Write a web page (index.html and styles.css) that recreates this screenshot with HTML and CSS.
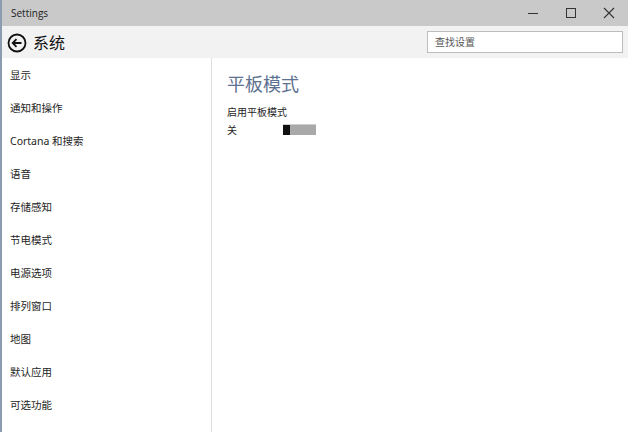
FILE: index.html
```html
<!DOCTYPE html>
<html lang="zh-CN">
<head>
    <meta charset="UTF-8">
    <title>Settings</title>
    <link rel="stylesheet" href="styles.css">
</head>
<body>
    <div class="window">
        <!-- Title bar -->
        <div class="titlebar">
            <span class="titlebar__text">Settings</span>
            <div class="controls">
                <span class="control">
                    <svg width="12" height="12" viewBox="0 0 12 12"><line x1="1" y1="6.5" x2="11" y2="6.5" stroke="#333" stroke-width="1"/></svg>
                </span>
                <span class="control">
                    <svg width="12" height="12" viewBox="0 0 12 12"><rect x="1.5" y="1.5" width="9" height="9" fill="none" stroke="#333" stroke-width="1"/></svg>
                </span>
                <span class="control">
                    <svg width="12" height="12" viewBox="0 0 12 12"><path d="M1 1 L11 11 M11 1 L1 11" stroke="#333" stroke-width="1.1"/></svg>
                </span>
            </div>
        </div>

        <!-- Header -->
        <div class="header">
            <svg class="back" width="20" height="20" viewBox="0 0 20 20">
                <circle cx="10" cy="10" r="8.5" fill="none" stroke="#111" stroke-width="1.8"/>
                <path d="M14.5 10 H6 M9.5 6.2 L5.7 10 L9.5 13.8" fill="none" stroke="#111" stroke-width="1.8"/>
            </svg>
            <span class="header__title">系统</span>
            <div class="search">查找设置</div>
        </div>

        <div class="main">
            <!-- Sidebar -->
            <ul class="nav">
                <li>显示</li>
                <li>通知和操作</li>
                <li>Cortana 和搜索</li>
                <li>语音</li>
                <li>存储感知</li>
                <li>节电模式</li>
                <li>电源选项</li>
                <li>排列窗口</li>
                <li>地图</li>
                <li>默认应用</li>
                <li>可选功能</li>
            </ul>

            <!-- Content -->
            <div class="content">
                <h2 class="content__title">平板模式</h2>
                <p class="setting__label">启用平板模式</p>
                <div class="setting__row">
                    <span class="setting__state">关</span>
                    <span class="toggle"><span class="toggle__thumb"></span></span>
                </div>
            </div>
        </div>
    </div>
</body>
</html>
```

FILE: styles.css
```css
/* Global Styles */
* {
    margin: 0;
    padding: 0;
    box-sizing: border-box;
}
body {
    width: 628px;
    height: 432px;
    overflow: hidden;
    font-family: "Liberation Sans", "Noto Sans CJK SC", sans-serif;
    color: #1e1e1e;
    background: #fff;
}
.window {
    height: 432px;
    display: flex;
    flex-direction: column;
    border-left: 2px solid #8c9bb0;
}
/* Title bar */
.titlebar {
    height: 26px;
    background: #c9c9c9;
    display: flex;
    align-items: center;
    padding-left: 9px;
}
.titlebar__text {
    font-family: "Open Sans", "Noto Sans CJK SC", sans-serif;
    font-size: 10px;
    color: #222;
}
.controls {
    margin-left: auto;
    display: flex;
}
.control {
    width: 38px;
    height: 26px;
    display: flex;
    align-items: center;
    justify-content: center;
}
/* Header */
.header {
    height: 32px;
    background: #f2f2f2;
    display: flex;
    align-items: center;
    padding-left: 5px;
}
.back {
    margin-top: 1px;
}
.header__title {
    margin-left: 6px;
    font-family: "Noto Sans CJK SC", sans-serif;
    font-size: 16px;
    color: #111;
}
.search {
    margin-left: auto;
    margin-right: 5px;
    width: 196px;
    height: 22px;
    background: #fff;
    border: 1px solid #bdbdbd;
    font-family: "Noto Sans CJK SC", sans-serif;
    font-size: 10px;
    line-height: 20px;
    padding-left: 7px;
    color: #555;
}
/* Main */
.main {
    flex: 1;
    display: flex;
    min-height: 0;
}
.nav {
    list-style: none;
    width: 210px;
    padding-top: 1px;
    border-right: 1px solid #dedede;
    overflow: hidden;
}
.nav li {
    height: 33px;
    line-height: 33px;
    padding-left: 8px;
    font-family: "Noto Sans", "Noto Sans CJK SC", sans-serif;
    font-size: 10.5px;
    color: #1e1e1e;
}
.content {
    flex: 1;
    padding: 14px 0 0 15px;
}
.content__title {
    font-family: "Noto Sans CJK SC", sans-serif;
    font-weight: normal;
    font-size: 18px;
    line-height: 23px;
    color: #5d7190;
}
.setting__label {
    margin-top: 10px;
    font-family: "Noto Sans CJK SC", sans-serif;
    font-size: 10px;
    line-height: 14px;
}
.setting__row {
    margin-top: 3px;
    display: flex;
    align-items: center;
    height: 14px;
}
.setting__state {
    width: 56px;
    font-family: "Noto Sans CJK SC", sans-serif;
    font-size: 10px;
}
.toggle {
    width: 33px;
    height: 11px;
    background: #a9a9a9;
    border-top: 1px solid #cfcfcf;
    display: flex;
}
.toggle__thumb {
    width: 7px;
    background: #111;
}
```
